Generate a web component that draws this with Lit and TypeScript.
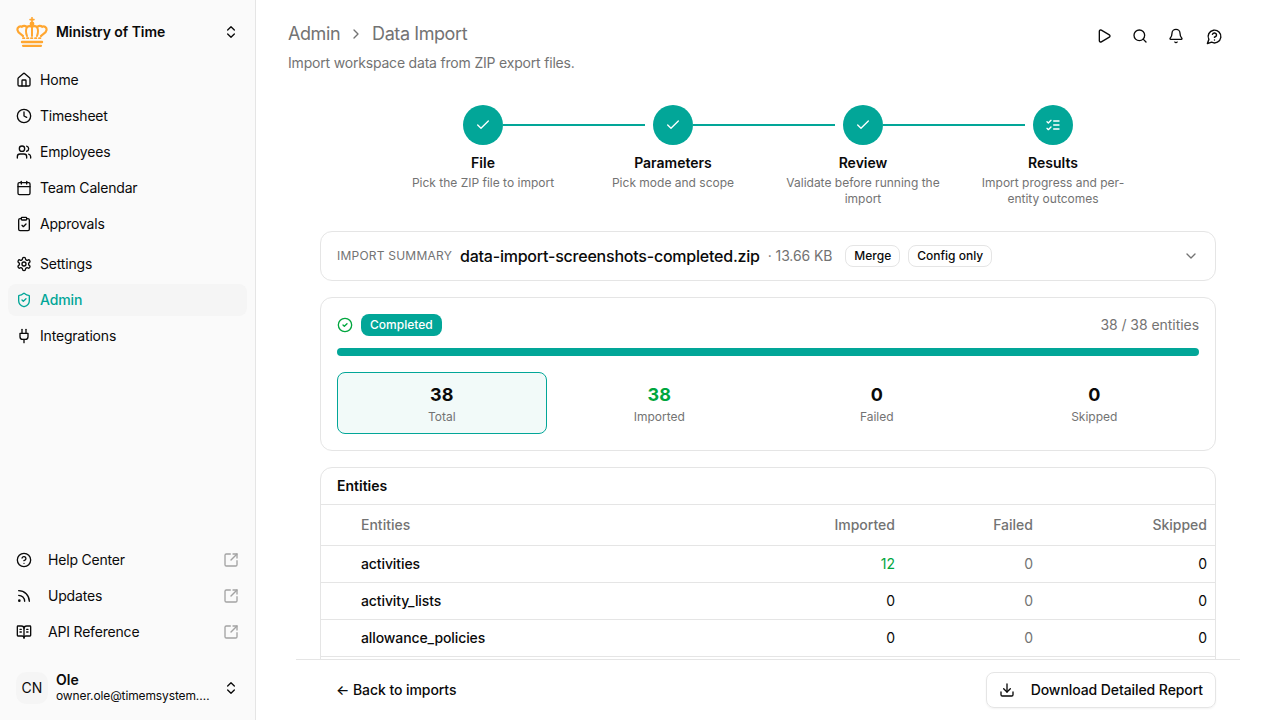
import { css, html, LitElement, svg, nothing } from 'lit';
import { customElement } from 'lit/decorators.js';

const ICONS = {
  house: svg`<path d="M15 21v-8a1 1 0 0 0-1-1h-4a1 1 0 0 0-1 1v8"/><path d="M3 10a2 2 0 0 1 .709-1.528l7-5.999a2 2 0 0 1 2.582 0l7 5.999A2 2 0 0 1 21 10v9a2 2 0 0 1-2 2H5a2 2 0 0 1-2-2z"/>`,
  clock: svg`<circle cx="12" cy="12" r="10"/><polyline points="12 6 12 12 16 14"/>`,
  users: svg`<path d="M16 21v-2a4 4 0 0 0-4-4H6a4 4 0 0 0-4 4v2"/><circle cx="9" cy="7" r="4"/><path d="M22 21v-2a4 4 0 0 0-3-3.87"/><path d="M16 3.13a4 4 0 0 1 0 7.75"/>`,
  calendar: svg`<path d="M8 2v4"/><path d="M16 2v4"/><rect width="18" height="18" x="3" y="4" rx="2"/><path d="M3 10h18"/>`,
  clipboard: svg`<rect width="8" height="4" x="8" y="2" rx="1"/><path d="M16 4h2a2 2 0 0 1 2 2v14a2 2 0 0 1-2 2H6a2 2 0 0 1-2-2V6a2 2 0 0 1 2-2h2"/><path d="m9 14 2 2 4-4"/>`,
  settings: svg`<path d="M12.22 2h-.44a2 2 0 0 0-2 2v.18a2 2 0 0 1-1 1.73l-.43.25a2 2 0 0 1-2 0l-.15-.08a2 2 0 0 0-2.73.73l-.22.38a2 2 0 0 0 .73 2.73l.15.1a2 2 0 0 1 1 1.72v.51a2 2 0 0 1-1 1.74l-.15.09a2 2 0 0 0-.73 2.73l.22.38a2 2 0 0 0 2.73.73l.15-.08a2 2 0 0 1 2 0l.43.25a2 2 0 0 1 1 1.73V20a2 2 0 0 0 2 2h.44a2 2 0 0 0 2-2v-.18a2 2 0 0 1 1-1.73l.43-.25a2 2 0 0 1 2 0l.15.08a2 2 0 0 0 2.73-.73l.22-.39a2 2 0 0 0-.73-2.73l-.15-.08a2 2 0 0 1-1-1.74v-.5a2 2 0 0 1 1-1.74l.15-.09a2 2 0 0 0 .73-2.73l-.22-.38a2 2 0 0 0-2.73-.73l-.15.08a2 2 0 0 1-2 0l-.43-.25a2 2 0 0 1-1-1.73V4a2 2 0 0 0-2-2z"/><circle cx="12" cy="12" r="3"/>`,
  shield: svg`<path d="M20 13c0 5-3.5 7.5-7.66 8.95a1 1 0 0 1-.67-.01C7.5 20.5 4 18 4 13V6a1 1 0 0 1 1-1c2 0 4.5-1.2 6.24-2.72a1.17 1.17 0 0 1 1.52 0C14.51 3.81 17 5 19 5a1 1 0 0 1 1 1z"/><path d="m9 12 2 2 4-4"/>`,
  plug: svg`<path d="M12 22v-5"/><path d="M9 8V2"/><path d="M15 8V2"/><path d="M18 8v5a4 4 0 0 1-4 4h-4a4 4 0 0 1-4-4V8Z"/>`,
  help: svg`<circle cx="12" cy="12" r="10"/><path d="M9.09 9a3 3 0 0 1 5.83 1c0 2-3 3-3 3"/><path d="M12 17h.01"/>`,
  rss: svg`<path d="M4 11a9 9 0 0 1 9 9"/><path d="M4 4a16 16 0 0 1 16 16"/><circle cx="5" cy="19" r="1"/>`,
  book: svg`<path d="M12 7v14"/><path d="M16 12h2"/><path d="M16 8h2"/><path d="M3 18a1 1 0 0 1-1-1V4a1 1 0 0 1 1-1h5a4 4 0 0 1 4 4 4 4 0 0 1 4-4h5a1 1 0 0 1 1 1v13a1 1 0 0 1-1 1h-6a3 3 0 0 0-3 3 3 3 0 0 0-3-3z"/><path d="M6 12h2"/><path d="M6 8h2"/>`,
  external: svg`<path d="M21 13v6a2 2 0 0 1-2 2H5a2 2 0 0 1-2-2V5a2 2 0 0 1 2-2h6"/><path d="m21 3-9 9"/><path d="M15 3h6v6"/>`,
  updown: svg`<path d="m7 15 5 5 5-5"/><path d="m7 9 5-5 5 5"/>`,
  play: svg`<path d="M5 5a2 2 0 0 1 3.008-1.728l11.997 6.998a2 2 0 0 1 .003 3.458l-12 7A2 2 0 0 1 5 19z"/>`,
  search: svg`<circle cx="11" cy="11" r="8"/><path d="m21 21-4.3-4.3"/>`,
  bell: svg`<path d="M10.268 21a2 2 0 0 0 3.464 0"/><path d="M3.262 15.326A1 1 0 0 0 4 17h16a1 1 0 0 0 .74-1.673C19.41 13.956 18 12.499 18 8A6 6 0 0 0 6 8c0 4.499-1.411 5.956-2.738 7.326"/>`,
  chat: svg`<path d="M7.9 20A9 9 0 1 0 4 16.1L2 22Z"/><path d="M9.09 9a3 3 0 0 1 5.83 1c0 2-3 3-3 3"/><path d="M12 17h.01"/>`,
  check: svg`<path d="M20 6 9 17l-5-5"/>`,
  listChecks: svg`<path d="m3 17 2 2 4-4"/><path d="m3 7 2 2 4-4"/><path d="M13 6h8"/><path d="M13 12h8"/><path d="M13 18h8"/>`,
  circleCheck: svg`<circle cx="12" cy="12" r="10"/><path d="m9 12 2 2 4-4"/>`,
  download: svg`<path d="M12 15V3"/><path d="M21 15v4a2 2 0 0 1-2 2H5a2 2 0 0 1-2-2v-4"/><path d="m7 10 5 5 5-5"/>`,
  chevronDown: svg`<path d="m6 9 6 6 6-6"/>`,
  chevronRight: svg`<path d="m9 18 6-6-6-6"/>`,
};

type IconName = keyof typeof ICONS;

const icon = (name: IconName, size = 16) => html`<svg
  class="icon"
  width=${size}
  height=${size}
  viewBox="0 0 24 24"
  fill="none"
  stroke="currentColor"
  stroke-width="2"
  stroke-linecap="round"
  stroke-linejoin="round"
>${ICONS[name]}</svg>`;

const crown = html`<svg class="logo" width="32" height="30" viewBox="0 0 32 30" fill="none" stroke="#ffa630" stroke-linecap="round">
  <path d="M16 0.6v5M14 2.6h4" stroke-width="1.6" />
  <circle cx="16" cy="7" r="2.4" fill="#ffa630" stroke="none" />
  <path d="M7 19C5.5 17 1.8 16 1.4 12.8 1.1 10.2 3.8 8.8 5.8 9.8 7.2 8.4 9.8 8.6 10.8 10.3 12 9.2 14 9 16 9.6 18 9 20 9.2 21.2 10.3 22.2 8.6 24.8 8.4 26.2 9.8 28.2 8.8 30.9 10.2 30.6 12.8 30.2 16 26.5 17 25 19" stroke-width="2.2" />
  <path d="M10.8 10.4C9.6 13 9.8 16 11 19M21.2 10.4C22.4 13 22.2 16 21 19M16 9.8V19" stroke-width="2" />
  <path d="M7 21.2h18" stroke-width="1.8" stroke-dasharray="1.4 2.6" />
  <path d="M6 25h20" stroke-width="2.4" />
  <path d="M7 28.8h18" stroke-width="2.2" />
</svg>`;

const NAV_MAIN: [IconName, string][] = [
  ['house', 'Home'],
  ['clock', 'Timesheet'],
  ['users', 'Employees'],
  ['calendar', 'Team Calendar'],
  ['clipboard', 'Approvals'],
];

const NAV_ADMIN: [IconName, string][] = [
  ['settings', 'Settings'],
  ['shield', 'Admin'],
  ['plug', 'Integrations'],
];

const NAV_LINKS: [IconName, string][] = [
  ['help', 'Help Center'],
  ['rss', 'Updates'],
  ['book', 'API Reference'],
];

const STEPS = [
  { title: 'File', desc: 'Pick the ZIP file to import', glyph: 'check' as IconName },
  { title: 'Parameters', desc: 'Pick mode and scope', glyph: 'check' as IconName },
  { title: 'Review', desc: 'Validate before running the import', glyph: 'check' as IconName },
  { title: 'Results', desc: 'Import progress and per-entity outcomes', glyph: 'listChecks' as IconName },
];

const STATS = [
  { value: '38', label: 'Total', selected: true },
  { value: '38', label: 'Imported', green: true },
  { value: '0', label: 'Failed' },
  { value: '0', label: 'Skipped' },
];

const ROWS: [string, number][] = [
  ['activities', 12],
  ['activity_lists', 0],
  ['allowance_policies', 0],
];

@customElement('app-root')
export class AppRoot extends LitElement {
  static styles = css`
    :host {
      display: flex;
      width: 1280px;
      height: 720px;
      overflow: hidden;
      background: #fff;
      color: #0a0a0a;
      font-family: Inter, 'Liberation Sans', sans-serif;
      font-size: 14px;
      line-height: 20px;
      letter-spacing: -0.19px;
    }

    .icon {
      flex-shrink: 0;
      display: block;
    }

    /* Sidebar */
    .sidebar {
      width: 239px;
      flex-shrink: 0;
      display: flex;
      flex-direction: column;
      background: #fafafa;
      border-right: 1px solid #e5e5e5;
      padding: 0 8px;
    }

    .brand {
      height: 32px;
      margin: 16px 0;
      padding: 0 8px;
      display: flex;
      align-items: center;
      gap: 8px;
      font-weight: 600;
      letter-spacing: -0.07px;
    }

    .grow {
      flex: 1;
    }

    .nav {
      display: flex;
      flex-direction: column;
      gap: 4px;
    }

    .nav + .nav {
      margin-top: 8px;
    }

    .nav-item {
      height: 32px;
      border-radius: 8px;
      padding: 0 8px;
      display: flex;
      align-items: center;
      gap: 8px;
    }

    .nav-item.active {
      background: #f5f5f5;
      color: #02a698;
      font-weight: 500;
      letter-spacing: -0.1px;
    }

    .links .nav-item {
      gap: 16px;
    }

    .links .label {
      flex: 1;
    }

    .ext {
      color: #a3a3a3;
    }

    .user {
      height: 32px;
      margin: 24px 0 16px;
      padding: 0 8px;
      display: flex;
      align-items: center;
      gap: 8px;
    }

    .avatar {
      width: 32px;
      height: 32px;
      border-radius: 10px;
      background: #f5f5f5;
      display: flex;
      align-items: center;
      justify-content: center;
      flex-shrink: 0;
      letter-spacing: 0;
    }

    .user-text {
      flex: 1;
      min-width: 0;
      display: flex;
      flex-direction: column;
    }

    .user-name {
      font-weight: 600;
      line-height: 16px;
      letter-spacing: 0;
    }

    .user-mail {
      font-size: 12px;
      line-height: 16px;
      letter-spacing: -0.12px;
      white-space: nowrap;
      overflow: hidden;
      text-overflow: ellipsis;
    }

    /* Main */
    .main {
      flex: 1;
      min-width: 0;
      display: flex;
      flex-direction: column;
    }

    .scroll {
      flex: 1;
      min-height: 0;
      overflow: hidden;
      padding: 0 64px 0 32px;
    }

    .topbar {
      display: flex;
      align-items: flex-start;
      justify-content: space-between;
      padding-top: 20px;
      height: 52px;
      box-sizing: border-box;
    }

    .crumbs {
      display: flex;
      align-items: center;
      gap: 8px;
      height: 28px;
      font-size: 18px;
      letter-spacing: -0.42px;
      color: #737373;
    }

    .actions {
      display: flex;
      gap: 4px;
      margin-right: -14px;
    }

    .action {
      width: 32px;
      height: 32px;
      display: flex;
      align-items: center;
      justify-content: center;
    }

    .action.last {
      margin-left: 2px;
    }

    .subtitle {
      color: #737373;
      margin-top: 1px;
    }

    .content {
      padding-left: 32px;
    }

    .stepper {
      display: flex;
      justify-content: center;
      margin-top: 32px;
    }

    .step {
      width: 190px;
      display: flex;
      flex-direction: column;
      align-items: center;
      text-align: center;
      position: relative;
    }

    .circle {
      width: 40px;
      height: 40px;
      border-radius: 50%;
      background: #02a698;
      color: #fff;
      display: flex;
      align-items: center;
      justify-content: center;
    }

    .connector {
      position: absolute;
      top: 19px;
      left: 115px;
      width: 142px;
      height: 2px;
      background: #02a698;
    }

    .step-title {
      font-weight: 600;
      letter-spacing: 0;
      margin-top: 8px;
    }

    .step-desc {
      font-size: 12px;
      line-height: 16px;
      letter-spacing: 0;
      color: #737373;
      margin-top: 2px;
      max-width: 158px;
    }

    .card {
      border: 1px solid #e5e5e5;
      border-radius: 12px;
      background: #fff;
      margin-top: 16px;
    }

    .summary {
      height: 50px;
      box-sizing: border-box;
      margin-top: 24px;
      padding: 0 16px;
      display: flex;
      align-items: center;
      gap: 8px;
    }

    .summary-label {
      font-size: 12px;
      color: #737373;
      letter-spacing: 0.22px;
    }

    .file-name {
      font-size: 16px;
      font-weight: 500;
      letter-spacing: -0.22px;
      white-space: nowrap;
    }

    .file-size {
      color: #737373;
      letter-spacing: -0.1px;
      margin-right: 5px;
    }

    .chip {
      height: 22px;
      box-sizing: border-box;
      border: 1px solid #e5e5e5;
      border-radius: 8px;
      padding: 0 8px;
      font-size: 12px;
      font-weight: 500;
      letter-spacing: 0;
      display: flex;
      align-items: center;
    }

    .summary .chevron {
      margin-left: auto;
      color: #737373;
    }

    .progress-card {
      padding: 16px;
    }

    .progress-head {
      display: flex;
      align-items: center;
      gap: 8px;
      height: 22px;
    }

    .done-icon {
      color: #00a63e;
    }

    .badge {
      height: 22px;
      box-sizing: border-box;
      padding: 0 9px;
      border-radius: 8px;
      background: #02a698;
      color: #fff;
      font-size: 12px;
      font-weight: 500;
      letter-spacing: 0;
      display: flex;
      align-items: center;
    }

    .count {
      margin-left: auto;
      color: #737373;
      letter-spacing: -0.05px;
    }

    .bar {
      height: 8px;
      border-radius: 4px;
      background: #02a698;
      margin-top: 12px;
    }

    .stats {
      display: grid;
      grid-template-columns: repeat(4, 1fr);
      gap: 8px;
      margin-top: 16px;
    }

    .stat {
      height: 62px;
      box-sizing: border-box;
      border: 1px solid transparent;
      border-radius: 8px;
      padding-top: 2px;
      display: flex;
      flex-direction: column;
      align-items: center;
      justify-content: center;
      letter-spacing: 0;
    }

    .stat.selected {
      background: #f2faf9;
      border-color: #02a698;
    }

    .stat-value {
      font-size: 18px;
      line-height: 24px;
      font-weight: 700;
    }

    .stat-value.green {
      color: #00a63e;
    }

    .stat-label {
      font-size: 12px;
      line-height: 16px;
      color: #737373;
      margin-top: 2px;
    }

    .table-card {
      min-height: 240px;
    }

    .entities-title {
      height: 37px;
      box-sizing: border-box;
      padding: 0 16px;
      display: flex;
      align-items: center;
      font-weight: 600;
      letter-spacing: 0;
      border-bottom: 1px solid #e5e5e5;
    }

    table {
      width: 100%;
      border-collapse: collapse;
      table-layout: fixed;
    }

    th,
    td {
      padding: 0 8px;
      text-align: right;
      border-bottom: 1px solid #e5e5e5;
      font-size: 14px;
      letter-spacing: 0;
    }

    th {
      height: 40px;
      font-weight: 500;
      color: #737373;
    }

    td {
      height: 36px;
    }

    th:first-child,
    td:first-child {
      text-align: left;
      padding-left: 40px;
    }

    td:first-child {
      font-weight: 500;
      letter-spacing: -0.1px;
    }

    .col-imported {
      width: 138px;
    }

    .col-skipped {
      width: 174px;
    }

    td.green {
      color: #00a63e;
    }

    td.muted {
      color: #737373;
    }

    /* Footer */
    .footer {
      height: 61px;
      flex-shrink: 0;
      box-sizing: border-box;
      margin: 0 40px;
      padding: 0 24px 0 40px;
      border-top: 1px solid #e5e5e5;
      display: flex;
      align-items: center;
      justify-content: space-between;
      background: #fff;
    }

    .back {
      font-weight: 500;
      letter-spacing: -0.07px;
    }

    .download {
      height: 36px;
      box-sizing: border-box;
      padding: 0 12px;
      border: 1px solid #e5e5e5;
      border-radius: 8px;
      display: flex;
      align-items: center;
      gap: 16px;
      font-weight: 500;
      letter-spacing: -0.08px;
      box-shadow: 0 1px 2px rgba(0, 0, 0, 0.05);
    }
  `;

  private navItem([name, label]: [IconName, string], active = false) {
    return html`<div class="nav-item ${active ? 'active' : ''}">
      ${icon(name)}<span class="label">${label}</span>
    </div>`;
  }

  private renderSidebar() {
    return html`<aside class="sidebar">
      <div class="brand">
        ${crown}
        <span class="grow">Ministry of Time</span>
        ${icon('updown')}
      </div>
      <nav class="nav">${NAV_MAIN.map((n) => this.navItem(n))}</nav>
      <nav class="nav">${NAV_ADMIN.map((n) => this.navItem(n, n[1] === 'Admin'))}</nav>
      <div class="grow"></div>
      <nav class="nav links">
        ${NAV_LINKS.map(
          ([name, label]) => html`<div class="nav-item">
            ${icon(name)}<span class="label">${label}</span>
            <span class="ext">${icon('external')}</span>
          </div>`
        )}
      </nav>
      <div class="user">
        <div class="avatar">CN</div>
        <div class="user-text">
          <span class="user-name">Ole</span>
          <span class="user-mail">owner.ole@timemsystem.com</span>
        </div>
        ${icon('updown')}
      </div>
    </aside>`;
  }

  private renderStepper() {
    return html`<div class="stepper">
      ${STEPS.map(
        (step, i) => html`<div class="step">
          <div class="circle">${icon(step.glyph)}</div>
          ${i < STEPS.length - 1 ? html`<div class="connector"></div>` : nothing}
          <div class="step-title">${step.title}</div>
          <div class="step-desc">${step.desc}</div>
        </div>`
      )}
    </div>`;
  }

  private renderTable() {
    return html`<div class="card table-card">
      <div class="entities-title">Entities</div>
      <table>
        <colgroup>
          <col />
          <col class="col-imported" />
          <col class="col-imported" />
          <col class="col-skipped" />
        </colgroup>
        <thead>
          <tr>
            <th>Entities</th>
            <th>Imported</th>
            <th>Failed</th>
            <th>Skipped</th>
          </tr>
        </thead>
        <tbody>
          ${ROWS.map(
            ([name, imported]) => html`<tr>
              <td>${name}</td>
              <td class=${imported > 0 ? 'green' : ''}>${imported}</td>
              <td class="muted">0</td>
              <td>0</td>
            </tr>`
          )}
        </tbody>
      </table>
    </div>`;
  }

  render() {
    return html`
      ${this.renderSidebar()}
      <main class="main">
        <div class="scroll">
          <header class="topbar">
            <div class="crumbs">
              <span>Admin</span>${icon('chevronRight')}<span>Data Import</span>
            </div>
            <div class="actions">
              <div class="action">${icon('play')}</div>
              <div class="action">${icon('search')}</div>
              <div class="action">${icon('bell')}</div>
              <div class="action last">${icon('chat', 17)}</div>
            </div>
          </header>
          <div class="subtitle">Import workspace data from ZIP export files.</div>
          <div class="content">
            ${this.renderStepper()}
            <div class="card summary">
              <span class="summary-label">IMPORT SUMMARY</span>
              <span class="file-name">data-import-screenshots-completed.zip</span>
              <span class="file-size">· 13.66 KB</span>
              <span class="chip">Merge</span>
              <span class="chip">Config only</span>
              <span class="chevron">${icon('chevronDown')}</span>
            </div>
            <div class="card progress-card">
              <div class="progress-head">
                <span class="done-icon">${icon('circleCheck')}</span>
                <span class="badge">Completed</span>
                <span class="count">38 / 38 entities</span>
              </div>
              <div class="bar"></div>
              <div class="stats">
                ${STATS.map(
                  (s) => html`<div class="stat ${s.selected ? 'selected' : ''}">
                    <div class="stat-value ${s.green ? 'green' : ''}">${s.value}</div>
                    <div class="stat-label">${s.label}</div>
                  </div>`
                )}
              </div>
            </div>
            ${this.renderTable()}
          </div>
        </div>
        <footer class="footer">
          <span class="back">← Back to imports</span>
          <div class="download">${icon('download')}<span>Download Detailed Report</span></div>
        </footer>
      </main>
    `;
  }
}
